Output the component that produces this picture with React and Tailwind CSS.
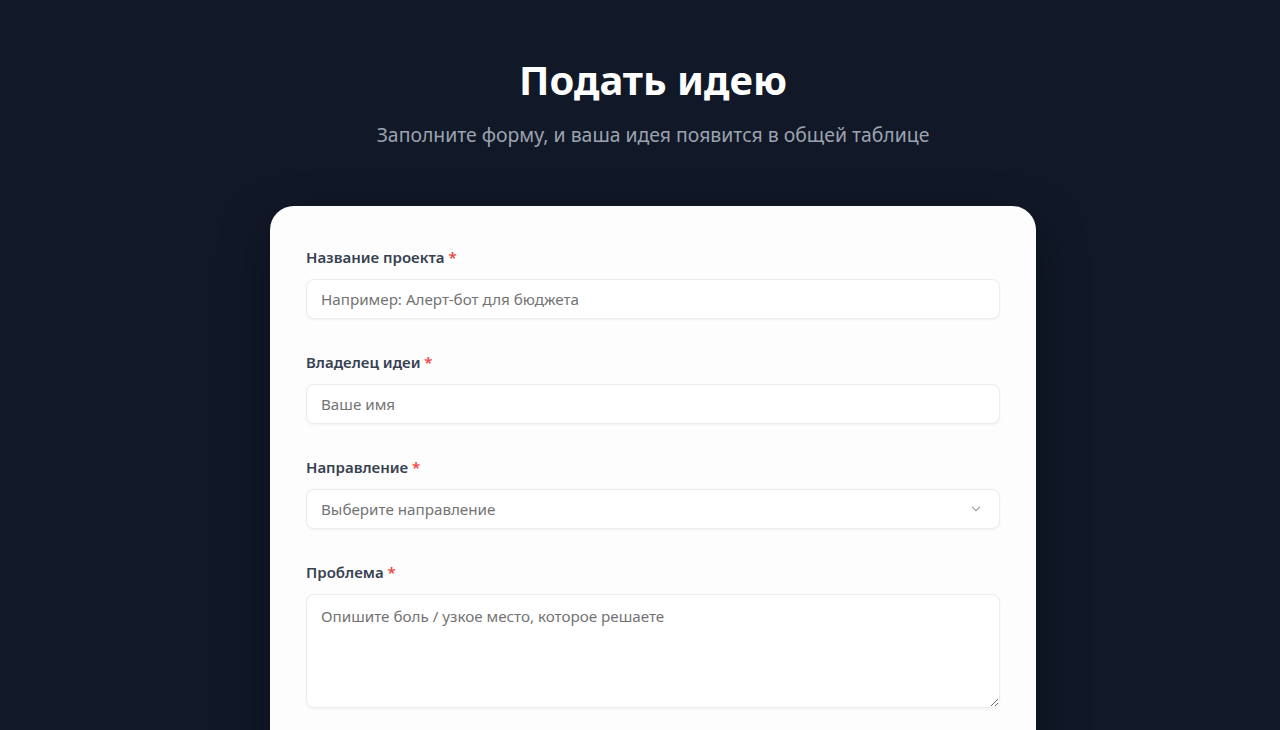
import React from "react";

function Label({ children }) {
  return (
    <label className="block text-[15px] leading-[20px] font-semibold text-[#374151] mb-3">
      {children} <span className="text-[#ef4444]">*</span>
    </label>
  );
}

const base =
  "w-full rounded-lg border border-[#ececec] bg-white px-3.5 text-[15.2px] placeholder:text-[#737373] shadow-[0_1px_3px_rgba(0,0,0,0.05)] outline-none";

export default function App() {
  return (
    <div
      className="min-h-screen bg-[#111827] overflow-hidden"
      style={{ fontFamily: '"Noto Sans", "Open Sans", sans-serif' }}
    >
      <div className="flex flex-col items-center pt-[58px] pl-[26px]">
        <h1 className="text-[40px] leading-[44px] font-bold text-white">Подать идею</h1>
        <p className="mt-[19px] text-[19.4px] leading-[28px] text-[#9ca3af]">
          Заполните форму, и ваша идея появится в общей таблице
        </p>
        <div className="mt-[57px] w-[766px] rounded-[24px] bg-[#fdfdfd] px-9 pt-[41px] pb-16 shadow-[0_20px_50px_rgba(0,0,0,0.35)]">
          <div className="flex flex-col gap-[33px]">
            <div>
              <Label>Название проекта</Label>
              <input className={base + " h-10 text-[#111827]"} placeholder="Например: Алерт-бот для бюджета" />
            </div>
            <div>
              <Label>Владелец идеи</Label>
              <input className={base + " h-10 text-[#111827]"} placeholder="Ваше имя" />
            </div>
            <div>
              <Label>Направление</Label>
              <div className="relative">
                <div className={base + " h-10 flex items-center text-[#737373]"}>Выберите направление</div>
                <svg
                  className="absolute right-[17px] top-1/2 -translate-y-1/2"
                  width="14"
                  height="14"
                  viewBox="0 0 24 24"
                  fill="none"
                  stroke="#a3a3a3"
                  strokeWidth="2"
                  strokeLinecap="round"
                  strokeLinejoin="round"
                >
                  <path d="M6 9l6 6 6-6" />
                </svg>
              </div>
            </div>
            <div>
              <Label>Проблема</Label>
              <textarea
                className={base + " block h-[114px] py-2.5 leading-[22px] text-[#111827]"}
                placeholder="Опишите боль / узкое место, которое решаете"
              />
            </div>
          </div>
        </div>
      </div>
    </div>
  );
}
